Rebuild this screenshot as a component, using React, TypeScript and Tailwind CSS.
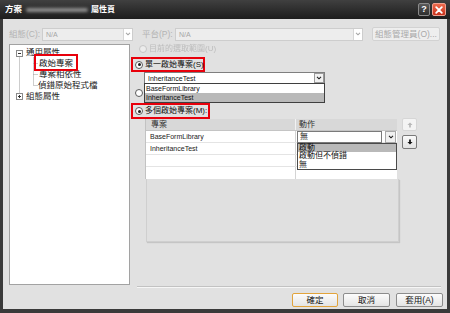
import React from "react"

const font = "font-['Liberation_Sans','Noto_Sans_CJK_TC',sans-serif]"

function Chevron({ className = "" }: { className?: string }) {
  return (
    <svg viewBox="0 0 7 5" className={className}>
      <path d="M1 1l2.5 2.5L6 1" fill="none" stroke="currentColor" strokeWidth="1.4" />
    </svg>
  )
}

function Radio({ checked, disabled }: { checked?: boolean; disabled?: boolean }) {
  return (
    <span
      className={`w-[8px] h-[8px] rounded-full border flex items-center justify-center shrink-0 ${
        disabled ? "border-[#c6c6c6] bg-[#ececec]" : "border-[#5c5c5c] bg-white"
      }`}
    >
      {checked && <span className="w-[3px] h-[3px] rounded-full bg-[#1e1e1e]" />}
    </span>
  )
}

function Arrow({ down, className = "" }: { down?: boolean; className?: string }) {
  return (
    <svg viewBox="0 0 7 7" className={`w-[6px] h-[6px] ${down ? "rotate-180" : ""} ${className}`}>
      <path d="M3.5 0.5L6.5 3.5H4.5V6.5H2.5V3.5H0.5Z" fill="currentColor" />
    </svg>
  )
}

function DisabledSelect({ width }: { width: string }) {
  return (
    <div className={`${width} h-[13px] bg-[#ededed] border border-[#cdcdcd] flex items-center`}>
      <span className="pl-[3px] text-[7px] text-[#a6a6a6] leading-none flex-1">N/A</span>
      <span className="w-[9px] h-[11px] bg-white border-l border-[#d6d6d6] flex items-center justify-center text-[#a8a8a8]">
        <Chevron className="w-[6px] h-[4px]" />
      </span>
    </div>
  )
}

function TreeRow({ label, pl }: { label: string; pl: string }) {
  return (
    <div className={`h-[11px] flex items-center ${pl} text-[8.5px] leading-none text-[#1a1a1a]`}>{label}</div>
  )
}

export default function App() {
  return (
    <div className={`w-[450px] h-[313px] bg-[#3a3a3a] flex flex-col overflow-hidden whitespace-nowrap ${font}`}>
      {/* title bar */}
      <div className="h-[19px] shrink-0 flex items-center pl-[5px] pr-[4px] bg-gradient-to-b from-[#404040] to-[#1d1d1d]">
        <span className="text-white font-bold text-[8.5px] leading-none">方案</span>
        <span className="ml-[4px] w-[62px] h-[4px] rounded-full bg-[#8c8c8c] blur-[1.5px]" />
        <span className="ml-[3px] text-white font-bold text-[8px] leading-none">屬性頁</span>
        <div className="ml-auto flex gap-[2px]">
          <span className="w-[12px] h-[13px] rounded-[2px] border border-[#8a8a8a] bg-gradient-to-b from-[#5a5a5a] to-[#2e2e2e] flex items-center justify-center text-white text-[9px] font-bold leading-none">
            ?
          </span>
          <span className="w-[14px] h-[13px] rounded-[2px] border border-[#f0a090] bg-gradient-to-b from-[#ee6a4c] to-[#c8301a] flex items-center justify-center">
            <svg viewBox="0 0 8 8" className="w-[8px] h-[8px]">
              <path d="M1.2 1.2L6.8 6.8M6.8 1.2L1.2 6.8" stroke="white" strokeWidth="1.8" strokeLinecap="round" />
            </svg>
          </span>
        </div>
      </div>

      {/* body */}
      <div className="flex-1 mx-[3px] mb-[4px] bg-[#e1e1e1] flex flex-col">
        {/* top row */}
        <div className="mt-[8px] h-[14px] flex items-center">
          <span className="ml-[6px] w-[33px] text-[8.5px] leading-none text-[#b3b3b3]">組態(C):</span>
          <DisabledSelect width="w-[91px]" />
          <span className="ml-[9px] w-[33px] text-[8.5px] leading-none text-[#b3b3b3]">平台(P):</span>
          <DisabledSelect width="w-[188px]" />
          <span className="ml-[9px] w-[68px] h-[14px] bg-[#eeeeee] border border-[#d2d2d2] rounded-[2px] flex items-center justify-center text-[8.5px] leading-none text-[#a9a9a9]">
            組態管理員(O)...
          </span>
        </div>

        {/* main row */}
        <div className="mt-[3px] h-[241px] flex">
          {/* tree */}
          <div className="ml-[6px] w-[121px] h-full bg-white border border-[#a2a2a2] relative pt-[2px]">
            <svg className="absolute left-0 top-0 w-[40px] h-[60px]" viewBox="0 0 40 60">
              <g stroke="#9a9a9a" strokeWidth="1" strokeDasharray="1 1" fill="none">
                <path d="M9.5 12.5V48" />
                <path d="M23.5 12.5V40.5" />
                <path d="M23.5 18.5H28M23.5 29.5H28M23.5 40.5H28" />
              </g>
              <rect x="6.5" y="5.5" width="6" height="6" fill="white" stroke="#8a8a8a" />
              <path d="M8 8.5H11" stroke="#333" />
              <rect x="6.5" y="48.5" width="6" height="6" fill="white" stroke="#8a8a8a" />
              <path d="M8 51.5H11M9.5 50V53" stroke="#333" />
            </svg>
            <TreeRow label="通用屬性" pl="pl-[16px]" />
            <div className="h-[11px] flex items-center pl-[29px]">
              <span className="relative text-[8.5px] leading-none text-[#1a1a1a]">
                啟始專案
                <span className="absolute -left-[5px] -right-[5px] -top-[5px] -bottom-[3px] border-2 border-[#e8000b]" />
              </span>
            </div>
            <TreeRow label="專案相依性" pl="pl-[29px]" />
            <TreeRow label="偵錯原始程式檔" pl="pl-[28px]" />
            <TreeRow label="組態屬性" pl="pl-[16px]" />
          </div>

          {/* right column */}
          <div className="flex-1 flex flex-col">
            <div className="h-[10px] flex items-center gap-[2px] pl-[9px]">
              <Radio disabled />
              <span className="text-[8px] leading-none text-[#bdbdbd] blur-[0.4px]">目前的選取範圍(U)</span>
            </div>

            <div className="mt-[3px] ml-[1px] w-[74px] h-[15px] border-2 border-[#e8000b] flex items-center gap-[2px] pl-[2px]">
              <Radio checked />
              <span className="text-[8px] leading-none text-[#111]">單一啟始專案(S)</span>
            </div>

            <div className="ml-[14px] w-[181px] h-[12px] relative bg-white border border-[#7f7f7f] flex items-center">
              <span className="pl-[3px] flex-1 text-[7px] leading-none text-[#111]">InheritanceTest</span>
              <span className="w-[10px] h-[10px] border border-[#9a9a9a] bg-[#f2f2f2] flex items-center justify-center text-[#222]">
                <Chevron className="w-[6px] h-[4px]" />
              </span>
              <div className="absolute left-[-1px] right-[-1px] top-[10px] h-[20px] bg-white border border-[#3f3f3f] z-10 flex flex-col">
                <div className="h-[9px] flex items-center pl-[1px] text-[7px] leading-none text-[#111]">BaseFormLibrary</div>
                <div className="h-[9px] flex items-center pl-[1px] bg-[#b9b9b9] text-[7px] leading-none text-[#111]">
                  InheritanceTest
                </div>
              </div>
            </div>

            <div className="mt-[5px] ml-[5px] h-[8px] flex items-center">
              <Radio />
            </div>

            <div className="mt-[6px] ml-[1px] w-[79px] h-[16px] border-2 border-[#e8000b] flex items-center gap-[2px] pl-[2px]">
              <Radio checked />
              <span className="text-[8px] leading-none text-[#111]">多個啟始專案(M):</span>
            </div>

            {/* grid + order buttons */}
            <div className="flex">
              <div className="ml-[15px] w-[254px] flex flex-col">
                <div className="w-[252px] flex flex-col border-l border-[#c2c2c2]">
                  <div className="h-[12px] flex bg-[#d8d8d8] border-b border-[#c4c4c4]">
                    <div className="w-[150px] flex items-center pl-[5px] text-[8px] leading-none text-[#333] border-r border-[#f2f2f2]">
                      專案
                    </div>
                    <div className="flex-1 flex items-center pl-[3px] text-[8px] leading-none text-[#333]">動作</div>
                  </div>
                  <div className="h-[12px] flex bg-white border-b border-[#e4e4e4]">
                    <div className="w-[150px] flex items-center pl-[4px] text-[7px] leading-none text-[#222] border-r border-[#d4d4d4]">
                      BaseFormLibrary
                    </div>
                    <div className="flex-1 flex items-center relative">
                      <span className="ml-[1px] w-[85px] h-[12px] border border-[#7a7a7a] bg-white flex items-center pl-[2px] text-[8px] leading-none text-[#111]">
                        無
                      </span>
                      <span className="ml-[3px] w-[11px] h-[12px] border border-[#a8a8a8] bg-[#f0f0f0] flex items-center justify-center text-[#222]">
                        <Chevron className="w-[6px] h-[4px]" />
                      </span>
                      <div className="absolute left-[1px] w-[100px] top-[12px] h-[27px] bg-white border border-[#4a4a4a] z-10 flex flex-col">
                        <div className="h-[8.5px] flex items-center pl-[1px] bg-[#b9b9b9] text-[8px] leading-none text-[#111]">啟動</div>
                        <div className="h-[8.5px] flex items-center pl-[1px] text-[8px] leading-none text-[#111]">啟動但不偵錯</div>
                        <div className="h-[8.5px] flex items-center pl-[1px] text-[8px] leading-none text-[#111]">無</div>
                      </div>
                    </div>
                  </div>
                  <div className="h-[12px] flex bg-white border-b border-[#e4e4e4]">
                    <div className="w-[150px] flex items-center pl-[4px] text-[7px] leading-none text-[#222] border-r border-[#d4d4d4]">
                      InheritanceTest
                    </div>
                    <div className="flex-1" />
                  </div>
                  <div className="h-[12px] flex bg-white border-b border-[#e4e4e4]">
                    <div className="w-[150px] border-r border-[#d4d4d4]" />
                    <div className="flex-1" />
                  </div>
                  <div className="h-[12px] flex bg-white">
                    <div className="w-[150px] border-r border-[#d4d4d4]" />
                    <div className="flex-1" />
                  </div>
                </div>
                <div className="ml-[1px] w-[253px] h-[63px] bg-[#e0e0e0] border border-t-0 border-[#cfcfcf] shadow-[1px_1px_1px_rgba(0,0,0,0.12)]" />
              </div>

              <div className="ml-[3px] flex flex-col gap-[4px] -mt-[1px]">
                <span className="w-[15px] h-[13px] rounded-[2px] border border-[#d6d6d6] bg-[#f4f4f4] flex items-center justify-center text-[#b8b8b8]">
                  <Arrow />
                </span>
                <span className="w-[15px] h-[14px] rounded-[2px] border border-[#7a7a7a] bg-gradient-to-b from-[#fafafa] to-[#e2e2e2] flex items-center justify-center text-[#111]">
                  <Arrow down />
                </span>
              </div>
            </div>
          </div>
        </div>

        {/* separator */}
        <div className="mt-[1px] ml-[134px] w-[304px] h-[2px] border-t border-[#c2c2c2] border-b border-b-[#f6f6f6]" />

        {/* buttons */}
        <div className="mt-[5px] flex justify-end pr-[4px]">
          <span className="w-[46px] h-[14px] rounded-[2px] border border-[#e2a43c] bg-gradient-to-b from-[#fcfcfc] to-[#e4e4e4] flex items-center justify-center text-[8.5px] leading-none text-[#111]">
            確定
          </span>
          <span className="ml-[5px] w-[47px] h-[14px] rounded-[2px] border border-[#8c8c8c] bg-gradient-to-b from-[#fcfcfc] to-[#e4e4e4] flex items-center justify-center text-[8.5px] leading-none text-[#111]">
            取消
          </span>
          <span className="ml-[6px] w-[47px] h-[14px] rounded-[2px] border border-[#8c8c8c] bg-gradient-to-b from-[#fcfcfc] to-[#e4e4e4] flex items-center justify-center text-[8.5px] leading-none text-[#111]">
            套用(A)
          </span>
        </div>
      </div>
    </div>
  )
}
